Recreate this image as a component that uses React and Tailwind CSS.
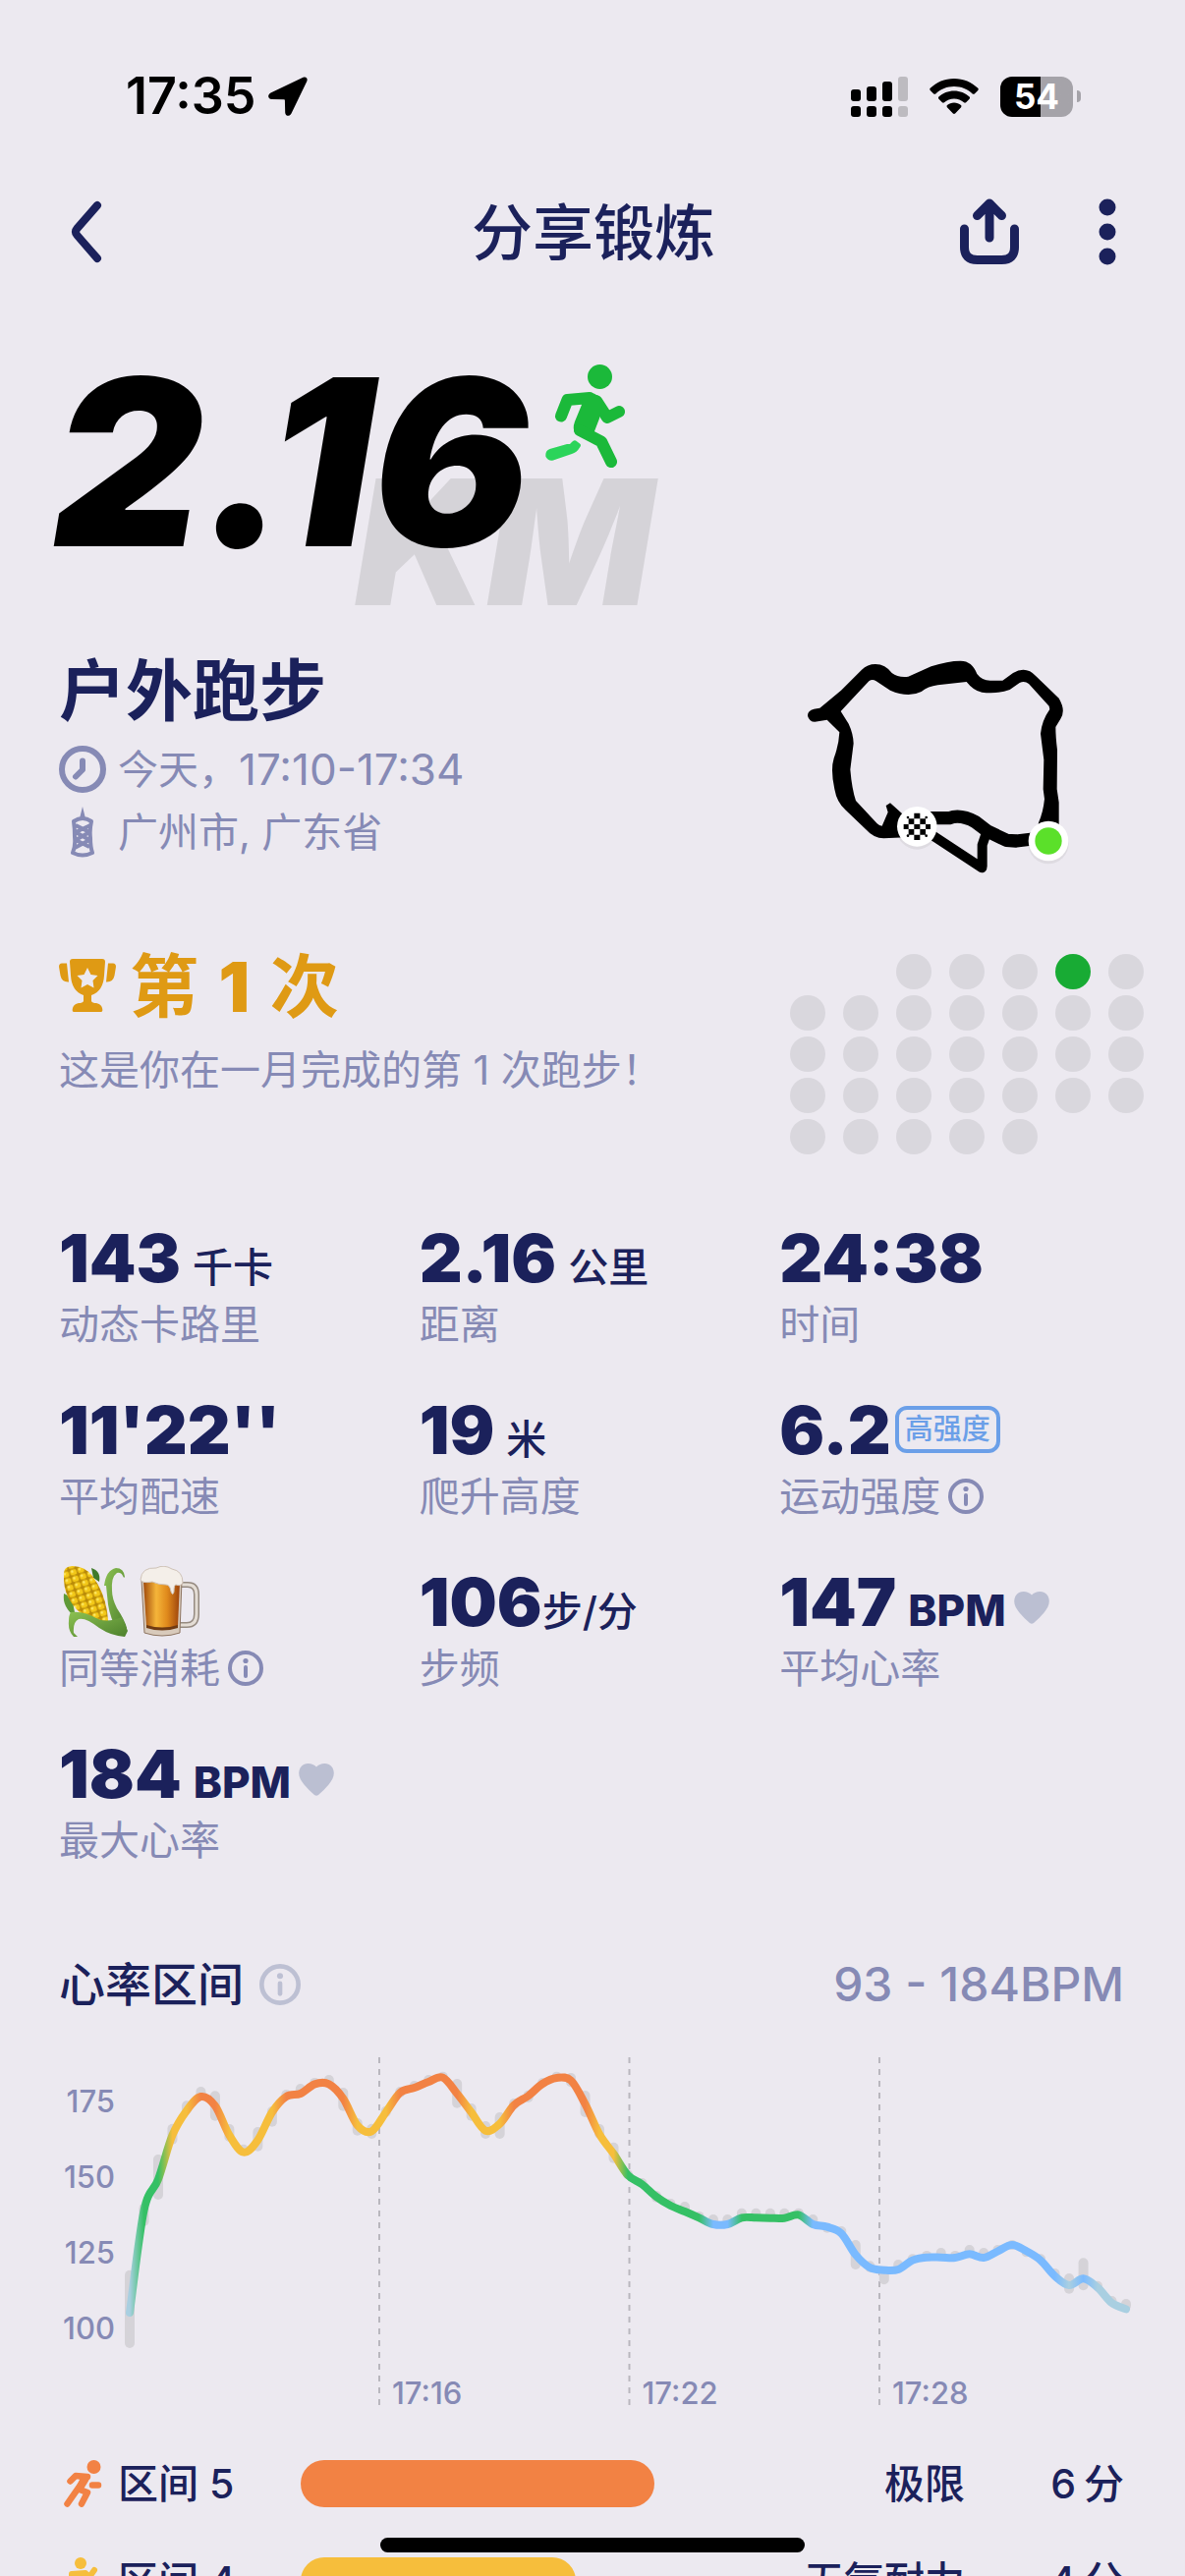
import { Fragment } from 'react';

const ZONE_COLORS = { 5: '#f28244', 4: '#f6be3c', 3: '#35c065', 2: '#7abaff', 1: '#a9cfe1' };

// [value, bar top, bar bottom], three plot units per pixel, top of the plot is 0
const SAMPLES = [
  [1182, 1052, 1290], [870, 848, 918], [775, 699, 837], [640, 605, 668], [565, 535, 577], [522, 492, 530], [550, 505, 596],
  [640, 606, 660], [692, 668, 700], [655, 615, 689], [570, 552, 614], [522, 501, 535], [513, 483, 520], [484, 465, 492],
  [484, 456, 490], [528, 495, 566], [610, 588, 641], [628, 605, 651], [570, 551, 585], [510, 492, 525], [495, 474, 505],
  [477, 456, 490], [464, 446, 475], [513, 468, 557], [570, 543, 596], [626, 597, 651], [605, 570, 651], [548, 528, 562],
  [520, 503, 540], [483, 465, 495], [465, 446, 472], [473, 450, 493], [545, 504, 585], [637, 606, 650], [697, 662, 725],
  [762, 745, 775], [790, 771, 800], [828, 810, 845], [855, 834, 865], [873, 843, 880], [892, 873, 900], [912, 882, 915],
  [912, 882, 915], [892, 863, 895], [892, 863, 895], [893, 863, 895], [893, 863, 895], [883, 863, 890], [912, 882, 915],
  [920, 910, 938], [940, 918, 950], [1005, 960, 1050], [1044, 1024, 1058], [1052, 1040, 1096], [1050, 1020, 1058],
  [1022, 1003, 1030], [1013, 993, 1020], [1013, 984, 1015], [1014, 993, 1020], [1003, 975, 1010], [1014, 984, 1020],
  [994, 975, 1000], [975, 960, 990], [994, 985, 1012], [1022, 1003, 1030], [1070, 1047, 1080], [1098, 1062, 1124],
  [1078, 1015, 1114], [1105, 1085, 1115], [1152, 1131, 1160], [1171, 1140, 1175],
];

const toX = i => 72 + (i * 1014) / 70;
const toY = v => (v - 402) / 3;

const zoneOf = v => {
  if (v < 558) return 5;
  if (v < 720) return 4;
  if (v < 900) return 3;
  if (v < 1088) return 2;
  return 1;
};

const linePath = () => {
  const pts = SAMPLES.map((s, i) => [toX(i), toY(s[0])]);
  let d = `M${pts[0][0]} ${pts[0][1]}`;
  for (let i = 0; i < pts.length - 1; i++) {
    const p0 = pts[i - 1] || pts[i];
    const p1 = pts[i];
    const p2 = pts[i + 1];
    const p3 = pts[i + 2] || p2;
    d += `C${p1[0] + (p2[0] - p0[0]) / 6} ${p1[1] + (p2[1] - p0[1]) / 6} ${p2[0] - (p3[0] - p1[0]) / 6} ${p2[1] - (p3[1] - p1[1]) / 6} ${p2[0]} ${p2[1]}`;
  }
  return d;
};

function StatusBar() {
  return (
    <div className="flex h-[196px] items-center justify-between pl-32 pr-[106px]">
      <div className="flex items-center gap-3">
        <span className="text-[52px] leading-none font-semibold text-black">17:35</span>
        <svg viewBox="0 0 40 40" className="size-10">
          <path d="M35.500.8 2.500 16.500C-1 18.500-.5 22.800 3.500 23L16 23.200c.6 0 .9.300.9.900L17.200 36.500c.2 4 4.500 4.500 6.300 1L39.200 5C40.600 1.800 38.500-.6 35.500.8z" fill="#000" />
        </svg>
      </div>
      <div className="flex items-center gap-[22px]">
        <svg viewBox="0 0 58 41" className="h-[41px] w-[58px]">
          <rect x="0" y="13" width="10" height="12" rx="3" />
          <rect x="16" y="10" width="10" height="15" rx="3" />
          <rect x="32" y="5" width="10" height="20" rx="3" />
          <rect x="48" y="0" width="10" height="25" rx="3" fill="#bdbbc0" />
          <rect x="0" y="30" width="10" height="11" rx="3" />
          <rect x="16" y="30" width="10" height="11" rx="3" />
          <rect x="32" y="30" width="10" height="11" rx="3" />
          <rect x="48" y="30" width="10" height="11" rx="3" fill="#bdbbc0" />
        </svg>
        <svg viewBox="0 0 50 37" className="h-[37px] w-[50px]">
          <path d="M25 0C15.500 0 7 3.700.7 9.800c-.6.600-.6 1.500 0 2.100l3.500 3.500c.6.600 1.500.600 2.100 0C11.200 10.700 17.800 8 25 8s13.800 2.700 18.700 7.400c.6.600 1.500.600 2.100 0l3.500-3.500c.6-.6.6-1.500 0-2.100C43 3.700 34.500 0 25 0z" />
          <path d="M25 12.500c-6 0-11.500 2.300-15.600 6.100-.6.600-.6 1.500 0 2.100l3.500 3.500c.6.600 1.500.600 2.100.1 2.700-2.400 6.200-3.800 10-3.800s7.300 1.400 10 3.800c.6.500 1.500.500 2.100-.1l3.500-3.500c.6-.6.6-1.500 0-2.100-4.100-3.800-9.600-6.100-15.600-6.100z" />
          <path d="M25 24.500c-2.700 0-5.100 1-7 2.600-.6.600-.6 1.500-.1 2.100l6 6.300c.6.600 1.600.600 2.200 0l6-6.300c.5-.6.5-1.500-.1-2.100-1.900-1.600-4.300-2.600-7-2.600z" />
        </svg>
        <div className="flex items-center gap-1">
          <div className="flex h-[41px] w-[74px] items-center justify-center rounded-xl bg-linear-to-r from-black from-55% to-[#a5a3a9] to-55% text-[35px] leading-none font-bold text-white">54</div>
          <span className="h-3 w-1 rounded-r-full bg-[#a5a3a9]" />
        </div>
      </div>
    </div>
  );
}

function Header() {
  return (
    <header className="grid h-20 grid-cols-3 items-center pr-[70px] pl-[72px] text-[#1b215b]">
      <button aria-label="返回" className="justify-self-start">
        <svg viewBox="0 0 32 64" className="h-16 w-8" fill="none" stroke="currentColor" strokeWidth="8" strokeLinecap="round" strokeLinejoin="round">
          <path d="M27 5 6.500 28.500q-3 3.500 0 7L27 59" />
        </svg>
      </button>
      <h1 className="justify-self-center pt-1 text-[62px] leading-19 font-medium whitespace-nowrap">分享锻炼</h1>
      <div className="flex items-center gap-20 justify-self-end">
        <button aria-label="分享">
          <svg viewBox="0 0 62 68" className="h-[68px] w-[62px]" fill="none" stroke="currentColor" strokeWidth="9" strokeLinecap="round" strokeLinejoin="round">
            <path d="M5.500 31v18.500q0 13 13 13h25q13 0 13-13V31M31 40V6M18.500 17.500 31 5l12.500 12.500" />
          </svg>
        </button>
        <button aria-label="更多">
          <svg viewBox="0 0 18 68" className="h-[68px] w-[18px]" fill="currentColor">
            <circle cx="9" cy="9" r="8.500" />
            <circle cx="9" cy="34" r="8.500" />
            <circle cx="9" cy="59" r="8.500" />
          </svg>
        </button>
      </div>
    </header>
  );
}

function Runner() {
  return (
    <svg viewBox="0 0 82 106" className="h-[106px] w-[82px]" fill="none" strokeLinecap="round" strokeLinejoin="round" stroke="#1bb93a" strokeWidth="12">
      <circle cx="55.500" cy="13.500" r="12.500" fill="#1bb93a" stroke="none" />
      <path d="M16 53.500 22.500 37 45 35" />
      <path d="M52 38 63 55 75 49" />
      <path d="M45 30q9-1 13 11l-3 15-5 13-7 9-12-7q-4-4-1-12l7-17-3-8z" fill="#1bb93a" stroke="none" />
      <path d="m35 68 22 11.500L67 100" />
      <path d="M25 82q4-5 6-3.500l4 3q2 1.500 0 4-3 5-8 6.500L8 98.500q-5 1-7.500-3.500-1-6 4-8L22 82z" fill="#2bd45a" stroke="none" />
    </svg>
  );
}

function Hero() {
  return (
    <section className="relative mt-[74px] flex h-[270px] items-start font-black italic">
      <span className="absolute top-[114px] left-[301px] text-[177px] leading-none text-[#d5d3d8]">KM</span>
      <div className="relative -ml-1.5 text-[236px] leading-[240px] text-black">2.16</div>
      <div className="relative mt-5 ml-4"><Runner /></div>
    </section>
  );
}

function RouteMap() {
  return (
    <svg viewBox="90 69 873 678" className="mr-[62px] h-[226px] w-[291px]" fill="none" stroke="#000" strokeLinecap="round" strokeLinejoin="round">
      <path
        d="M890 640V530L884 490 885 370Q880 330 880 300L895 275Q912 250 890 212L820 145Q790 112 750 135L718 158H680Q655 158 640 138 625 98 590 98 550 98 500 115L430 146Q400 150 380 135 360 108 330 108 305 108 288 125L225 188 160 242Q150 244 142 245 122 250 123 266 128 284 145 284L182 278 220 316Q218 355 203 395 192 430 205 490 212 530 238 553L300 612Q325 640 355 640L440 636V590L375 532 362 540 368 560 350 602Q342 602 335 595L270 525Q258 490 253 430L263 350Q262 320 248 290L224 252 265 208 310 160Q320 152 332 160L375 188Q430 212 470 192 490 176 520 172L608 162Q630 190 655 194 700 200 740 186L770 165Q785 158 798 168L860 236 862 246Q838 280 834 320L844 400 842 490 846 520Q842 560 828 592L820 640z"
        fill="#000" stroke="none"
      />
      <path d="M500 578 555 578Q590 565 635 590L672 618 730 646 760 648 810 642" strokeWidth="40" />
      <path d="M500 628 655 730M668 625 656 660 656 725" strokeWidth="30" />
      <g stroke="none">
        <circle cx="457" cy="612" r="62" fill="#000" opacity=".06" />
        <circle cx="858" cy="656" r="62" fill="#000" opacity=".06" />
        <circle cx="457" cy="604" r="61" fill="#fff" />
        <g fill="#000">
          <path d="M448 563h18v17h-18zM431 580h17v17h-17zM466 580h17v17h-17zM416 597h15v15h-15zM448 597h18v15h-18zM483 597h15v15h-15zM431 612h17v17h-17zM466 612h17v17h-17zM448 629h18v16h-18z" />
          <circle cx="429" cy="576" r="4" /><circle cx="485" cy="576" r="4" /><circle cx="429" cy="632" r="4" /><circle cx="485" cy="632" r="4" />
        </g>
        <circle cx="858" cy="648" r="61" fill="#fff" />
        <circle cx="858" cy="648" r="41" fill="#5be02a" />
      </g>
    </svg>
  );
}

function Summary() {
  return (
    <section className="mt-[43px] flex items-start justify-between">
      <div className="text-[#868ab5]">
        <h2 className="mb-2 text-[68px] leading-20 font-bold text-[#1b215b]">户外跑步</h2>
        <p className="flex h-16 items-center text-[41px] leading-16">
          <svg viewBox="0 0 48 48" className="mr-3 size-12" fill="none" stroke="currentColor" strokeWidth="6" strokeLinecap="round" strokeLinejoin="round">
            <circle cx="24" cy="24" r="21" />
            <path d="M24 15.500v9l-7 7" />
          </svg>
          今天，<span className="text-[44px]">17:10-17:34</span>
        </p>
        <p className="flex h-16 items-center text-[41px] leading-16">
          <svg viewBox="0 0 48 52" className="mr-3 h-13 w-12" fill="none" stroke="currentColor" strokeWidth="4" strokeLinejoin="round">
            <path d="M24 0 21 12h6z" fill="currentColor" stroke="none" />
            <path d="M15 15q9-6 18 0-2 9-1 17 0 9 2 15-10 5-20 0 3-7 2-16 0-9-1-16zM17 19l14 7-14 8 14 7M32 19 17 26l14 8-15 8" />
          </svg>
          广州市, 广东省
        </p>
      </div>
      <RouteMap />
    </section>
  );
}

function Milestone() {
  const days = Array.from({ length: 31 }, (_, i) => i + 1);
  return (
    <section className="mt-[66px] flex items-start justify-between">
      <div>
        <h2 className="flex h-24 items-center gap-3.5 text-[70px] leading-24 font-bold text-[#df9a14]">
          <svg viewBox="0 0 58 54" className="h-[54px] w-[58px]" fill="currentColor">
            <path fillRule="evenodd" d="M14 0h30q3 0 3 3l-1 14q-1 16-13 20v6q1 2 5 2 5 1 6 5 1 4-1 4H15q-2 0-1-4 1-4 6-5 4 0 5-2v-6Q13 33 12 17L11 3q0-3 3-3zm15 9-3.500 7-7 1 5 5-1 7.500L29 26l6.500 3.500-1-7.500 5-5-7-1z" />
            <path d="M8 4.500 10 23.500Q3 24 1.500 17L0 8q0-3.500 3-3.500zM50 4.500 48 23.500q7 .5 8.500-6.500L58 8q0-3.500-3-3.500z" />
          </svg>
          <span className="pt-1">第 <span className="mx-1 font-black">1</span> 次</span>
        </h2>
        <p className="mt-1.5 text-[41px] leading-16 text-[#868ab5]">这是你在一月完成的第 1 次跑步！</p>
      </div>
      <div className="mt-4 grid grid-cols-7 gap-x-[18px] gap-y-1.5">
        {days.map(d => (
          <span key={d} className={`size-9 rounded-full ${d === 1 ? 'col-start-3' : ''} ${d === 4 ? 'bg-[#18ab34]' : 'bg-[#d9d7dd]'}`} />
        ))}
      </div>
    </section>
  );
}

function Info({ className }) {
  return (
    <svg viewBox="0 0 36 36" className={className} fill="none" stroke="currentColor" strokeWidth="4" strokeLinecap="round">
      <circle cx="18" cy="18" r="16" />
      <path d="M18 17v9" />
      <circle cx="18" cy="10.500" r="2.600" fill="currentColor" stroke="none" />
    </svg>
  );
}

function Heart() {
  return (
    <svg viewBox="0 0 36 33" className="mt-3 ml-2 h-[33px] w-9" fill="#bbbfd2">
      <path d="M18 3.500C14-1 5-1.500 1.500 4.500c-3 6-.5 11.500 4 17Q11 28 16 32q2 1.500 4 0 5-4 10.500-10.500c4.500-5.500 7-11 4-17C31-1.500 22-1 18 3.500z" />
    </svg>
  );
}

function Corn() {
  return (
    <svg viewBox="0 0 70 72" className="h-[72px] w-[70px]">
      <defs>
        <pattern id="kernels" width="8" height="7" patternUnits="userSpaceOnUse" patternTransform="rotate(-18)">
          <rect width="8" height="7" fill="#b88a08" />
          <rect x=".6" y=".6" width="6.800" height="5.800" rx="2.500" fill="#f3c818" />
          <circle cx="3" cy="2.500" r="1.300" fill="#fdea6a" />
        </pattern>
        <linearGradient id="husk" x1="0" y1="0" x2="1" y2="1">
          <stop offset="0" stopColor="#8cc152" />
          <stop offset="1" stopColor="#4c7f2c" />
        </linearGradient>
      </defs>
      <path d="M33 2q10 3 8 14l-6-4z" fill="#3f7a2a" />
      <path d="M5 28q-2 14 12 24l-4-20z" fill="#5f9a38" />
      <path d="M5 10Q4 0 14 0q12 0 20 10 12 16 15 36l2 18Q34 60 22 48 4 32 5 10z" fill="url(#kernels)" />
      <path d="M46 20Q48 4 58 2q8 0 9 9-1 2-2-1-2-4-6-3-6 4-5 18 0 8 5 18 8 12 10 20-1 6-9 4-8-14-10-28-1-9-2-19z" fill="url(#husk)" />
      <path d="M12 47q12-2 28 7 10 4 24-2l6 14-3 6q-14-1-26-9-14-11-21-9-6 3-5 14l4 4q-1 2-4 0-6-6-5-16 0-6 2-9z" fill="url(#husk)" />
    </svg>
  );
}

function Beer() {
  return (
    <svg viewBox="0 0 64 72" className="h-[72px] w-16">
      <defs>
        <linearGradient id="beer" x1="0" x2="1">
          <stop offset="0" stopColor="#a14a0c" />
          <stop offset=".35" stopColor="#f5b53a" />
          <stop offset=".65" stopColor="#e08a1c" />
          <stop offset="1" stopColor="#9c430c" />
        </linearGradient>
      </defs>
      <path d="M42 19h7q9 0 9 10v20q0 11-10 11h-7" fill="none" stroke="#958a80" strokeWidth="6" />
      <path d="M42 19h7q9 0 9 10v20q0 11-10 11h-7" fill="none" stroke="#e4ddd5" strokeWidth="3" />
      <path d="M2 14h41l-2 54q-18 6-36 0z" fill="#d8cabb" stroke="#8d7460" strokeWidth="1" />
      <path d="M4 16h37l-2 46q-16 4-32 0z" fill="url(#beer)" />
      <path d="M7 60q16 5 32 0v3q-16 5-32 0z" fill="#6f3a12" />
      <path d="M1 14Q2 1 17 2q8-4 16 1 11 2 11 14-2 4-7 2-2 0-2 7-1 5-3 0-1-7-5-7-8 0-14-3-10 2-12-2z" fill="#f4efe9" stroke="#cfc3b8" strokeWidth="1" />
    </svg>
  );
}

const STATS = [
  { label: '动态卡路里', value: '143', unit: '千卡' },
  { label: '距离', value: '2.16', unit: '公里' },
  { label: '时间', value: '24:38' },
  { label: '平均配速', value: "11'22''" },
  { label: '爬升高度', value: '19', unit: '米' },
  { label: '运动强度', value: '6.2', badge: '高强度', info: true },
  { label: '同等消耗', emoji: true, info: true },
  { label: '步频', value: '106', unit: '步/分', tight: true },
  { label: '平均心率', value: '147', unit: 'BPM', heart: true },
  { label: '最大心率', value: '184', unit: 'BPM', heart: true },
];

function Stat({ stat }) {
  return (
    <div className="whitespace-nowrap">
      <dd className="flex h-20 items-center text-[#1b215b]">
        {stat.emoji && <><Corn /><span className="ml-3"><Beer /></span></>}
        {stat.value && (
          <span className="text-[68px] leading-20 font-black">
            {stat.value}
            {stat.unit && (
              <span className={`leading-none ${stat.tight ? '' : 'ml-3'} ${stat.heart ? 'text-[44px] font-extrabold' : 'text-[41px] font-medium'}`}>{stat.unit}</span>
            )}
          </span>
        )}
        {stat.badge && <span className="ml-1 rounded-xl border-4 border-[#6b9fe8] px-1.5 text-[29px] leading-10 font-medium text-[#6b9fe8]">{stat.badge}</span>}
        {stat.heart && <Heart />}
      </dd>
      <dt className="flex h-14 items-center gap-2 text-[41px] leading-14 text-[#868ab5]">
        {stat.label}
        {stat.info && <Info className="size-9" />}
      </dt>
    </div>
  );
}

function HeartChart() {
  return (
    <svg viewBox="0 0 1104 360" className="mt-[42px] w-full" role="img" aria-label="心率区间">
      <defs>
        <linearGradient id="zones" gradientUnits="userSpaceOnUse" x1={toX(0)} x2={toX(70)} y1="0" y2="0">
          {SAMPLES.map((s, i) => <stop key={i} offset={i / 70} stopColor={ZONE_COLORS[zoneOf(s[0])]} />)}
        </linearGradient>
      </defs>
      <g className="fill-[#868ab5] text-[31px] font-medium">
        {[175, 150, 125, 100].map((n, i) => <text key={n} x="57" y={56 + i * 77} textAnchor="end">{n}</text>)}
        {['17:16', '17:22', '17:28'].map((t, i) => (
          <Fragment key={t}>
            <path d={`M${326 + i * 254.500} 0v354`} stroke="#b9b7be" strokeWidth="2" strokeDasharray="6 6" />
            <text x={339 + i * 254.500} y="353">{t}</text>
          </Fragment>
        ))}
      </g>
      {SAMPLES.map(([, top, bottom], i) => (
        <rect key={i} x={toX(i) - 5} y={toY(top)} width="10" height={(bottom - top) / 3} rx="5" fill="#d5d3d8" />
      ))}
      <path d={linePath()} fill="none" stroke="url(#zones)" strokeWidth="8" strokeLinecap="round" strokeLinejoin="round" />
    </svg>
  );
}

function SprintIcon() {
  return (
    <svg viewBox="0 0 39 48" className="h-12 w-[39px]" fill="none" stroke="#f28244" strokeWidth="6.500" strokeLinecap="round" strokeLinejoin="round">
      <circle cx="30.500" cy="7" r="7" fill="#f28244" stroke="none" />
      <path d="M6.500 21.500 12 16l12 1M29 25.500h6" />
      <path d="m14 17 12-1q1 2-2 7l-5 8-7-3 4-8z" fill="#f28244" stroke="none" />
      <path d="M22 18 3.500 44.500M16 30l8 3-6 11.500" />
    </svg>
  );
}

function JogIcon() {
  return (
    <svg viewBox="0 0 39 48" className="h-12 w-[39px]" fill="none" stroke="#f6be3c" strokeWidth="6" strokeLinecap="round" strokeLinejoin="round">
      <circle cx="17" cy="6" r="6" fill="#f6be3c" stroke="none" />
      <path d="M8 24V17l14-1 4 4 5-7" />
      <path d="M11 15h12l-2 18H10z" fill="#f6be3c" stroke="none" />
      <path d="m13 31 8 4v10M10 33 4 44" />
    </svg>
  );
}

function ZoneRow({ icon, name, bar, level, minutes }) {
  return (
    <li className="flex h-12 items-center pr-5 pl-[5px] text-[41px] leading-12 font-medium text-[#1b215b]">
      {icon}
      <span className="ml-4 w-[186px] whitespace-nowrap">{name}</span>
      <div className={`h-12 rounded-full ${bar}`} />
      <span className="ml-auto">{level}</span>
      <span className="flex w-[162px] justify-end gap-2"><span>{minutes}</span>分</span>
    </li>
  );
}

export default function App() {
  return (
    <div className="relative h-screen overflow-hidden bg-[#ece9f0] font-['Inter','Noto_Sans_CJK_SC',sans-serif]">
      <StatusBar />
      <Header />
      <main className="pr-[42px] pl-[60px]">
        <Hero />
        <Summary />
        <Milestone />
        <dl className="mt-[65px] mr-1 grid grid-cols-3 gap-y-[39px]">
          {STATS.map(s => <Stat key={s.label} stat={s} />)}
        </dl>
        <section className="mt-[87px]">
          <div className="flex h-16 items-center justify-between pr-5">
            <h3 className="flex items-center gap-4 text-[47px] font-medium text-[#1b215b]">
              心率区间
              <Info className="size-[42px] text-[#bdc0d3]" />
            </h3>
            <span className="text-[48px] font-medium text-[#868ab5]">93 - 184BPM</span>
          </div>
          <HeartChart />
          <ul className="mt-[50px] flex flex-col gap-[51px]">
            <ZoneRow icon={<SprintIcon />} name="区间 5" bar="w-[360px] bg-[#f28244]" level="极限" minutes={6} />
            <ZoneRow icon={<JogIcon />} name="区间 4" bar="w-[280px] bg-[#f6be3c]" level="无氧耐力" minutes={4} />
          </ul>
        </section>
      </main>
      <div className="absolute bottom-6 left-1/2 h-[15px] w-[432px] -translate-x-1/2 rounded-full bg-black" />
    </div>
  );
}
